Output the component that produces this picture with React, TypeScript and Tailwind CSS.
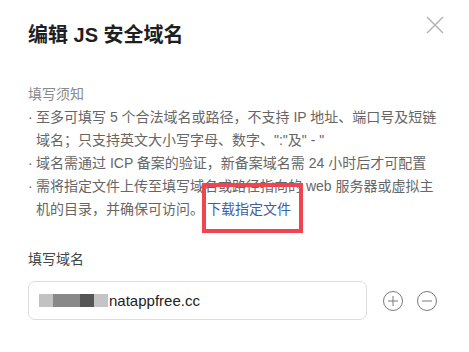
import React from "react";

const font = { fontFamily: '"Liberation Sans", "Noto Sans CJK SC", sans-serif' };

function Bullet({ children }: { children: React.ReactNode }) {
  return (
    <div className="flex">
      <span className="w-[8px] shrink-0">·</span>
      <div className="whitespace-nowrap">{children}</div>
    </div>
  );
}

export default function App() {
  return (
    <div
      className="relative w-[469px] h-[352px] bg-white overflow-hidden"
      style={font}
    >
      <div className="px-[28px] pt-[21px]">
        <h1 className="text-[20px] leading-[28px] font-semibold text-[#1f1f1f]">
          编辑 JS 安全域名
        </h1>

        <div className="mt-[34px] text-[14px] leading-[22px] text-[#8a8a8a]">
          填写须知
        </div>
        <div className="mt-[1px] text-[14px] leading-[23px] text-[#666666]">
          <Bullet>
            <div>至多可填写 5 个合法域名或路径，不支持 IP 地址、端口号及短链</div>
            <div>{'域名；只支持英文大小写字母、数字、":"及" - "'}</div>
          </Bullet>
          <Bullet>
            <div>域名需通过 ICP 备案的验证，新备案域名需 24 小时后才可配置</div>
          </Bullet>
          <Bullet>
            <div>需将指定文件上传至填写域名或路径指向的 web 服务器或虚拟主</div>
            <div>
              机的目录，并确保可访问。
              <span className="ml-[3px] text-[#3e5f9e]">下载指定文件</span>
            </div>
          </Bullet>
        </div>

        <div className="mt-[27px] text-[14px] leading-[22px] text-[#444444]">
          填写域名
        </div>

        <div className="mt-[11px] flex items-center">
          <div className="w-[339px] h-[39px] rounded-[7px] border border-[#dddddd] flex items-center pl-[10px]">
            <div className="flex h-[13px]">
              <div className="w-[14px] bg-[#c2c2c2]" />
              <div className="w-[27px] bg-[#888888]" />
              <div className="w-[14px] bg-[#555555]" />
              <div className="w-[14px] bg-[#c4c4c4]" />
            </div>
            <span className="ml-[1px] text-[15px] text-[#222222] leading-[20px]">
              natappfree.cc
            </span>
          </div>
          <div className="ml-[16px] flex items-center gap-[14px]">
            <svg width="20" height="20" viewBox="0 0 20 20" fill="none">
              <circle cx="10" cy="10" r="9.5" stroke="#7a7a7a" strokeWidth="1" />
              <path d="M10 5v10M5 10h10" stroke="#7a7a7a" strokeWidth="1" />
            </svg>
            <svg width="20" height="20" viewBox="0 0 20 20" fill="none">
              <circle cx="10" cy="10" r="9.5" stroke="#7a7a7a" strokeWidth="1" />
              <path d="M5 10h10" stroke="#7a7a7a" strokeWidth="1" />
            </svg>
          </div>
        </div>
      </div>

      <svg
        className="absolute left-[426px] top-[16px]"
        width="18"
        height="18"
        viewBox="0 0 18 18"
        fill="none"
      >
        <path d="M1 1l16 16M17 1L1 17" stroke="#b0b0b0" strokeWidth="1.4" />
      </svg>

      <div className="absolute left-[202px] top-[183px] w-[101px] h-[50px] border-[4px] border-[#f0444e]" />
    </div>
  );
}
